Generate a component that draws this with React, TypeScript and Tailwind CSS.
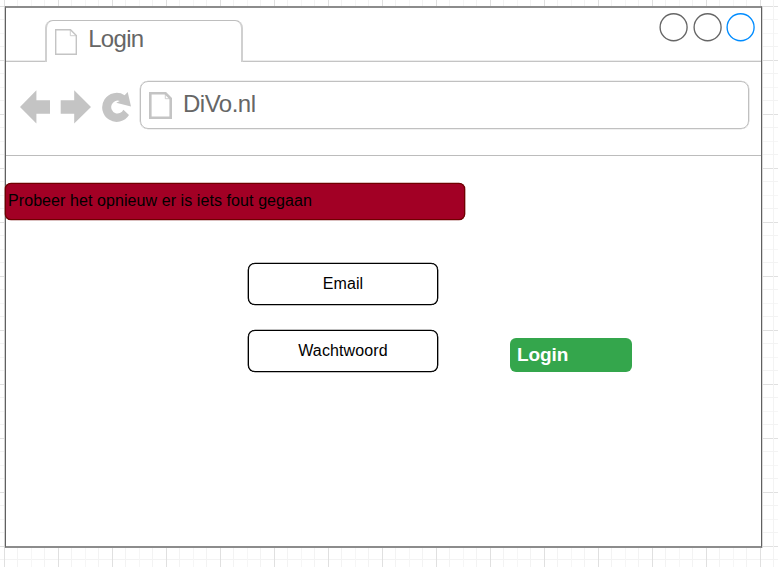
import type { ReactNode } from 'react';

function PageIcon({ className, stroke, w, h }: { className: string; stroke: number; w: number; h: number }) {
  const s = stroke / 2;
  return (
    <svg className={className} width={w} height={h} viewBox={`0 0 ${w} ${h}`} fill="none" stroke="#c4c4c4">
      <path strokeWidth={stroke} d={`M${s} ${s}H${w - 6.5}L${w - s} ${6.5}V${h - s}H${s}Z`} />
      <path strokeWidth="0.8" d={`M${w - 6.7} ${s}V6.7H${w - s}`} />
    </svg>
  );
}

function Field({ children }: { children: ReactNode }) {
  return (
    <div className="flex h-[42px] w-[190px] items-center justify-center rounded-[7px] border border-black bg-white pb-px text-base tracking-[0.12px] shadow-[0_0_0_0.35px_#000]">
      {children}
    </div>
  );
}

const circles = ['#666666', '#666666', '#008cff'];

export default function App() {
  return (
    <div
      className="h-[567px] w-[778px] overflow-hidden bg-white pt-[6px] pl-[5px] font-['Liberation_Sans',Arial,sans-serif] bg-[linear-gradient(to_right,#e0e0e0_1px,transparent_1px,transparent_13px,#f3f3f3_13px,#f3f3f3_14px,transparent_14px,transparent_27px,#f6f6f6_27px,#f6f6f6_28px,transparent_28px,transparent_40px,#f3f3f3_40px,#f3f3f3_41px,transparent_41px),linear-gradient(to_bottom,#e0e0e0_1px,transparent_1px,transparent_13px,#f3f3f3_13px,#f3f3f3_14px,transparent_14px,transparent_27px,#f6f6f6_27px,#f6f6f6_28px,transparent_28px,transparent_40px,#f3f3f3_40px,#f3f3f3_41px,transparent_41px)] bg-size-[54px_54px] bg-position-[4px_6px]"
    >
      <main className="flex h-[542px] w-[757px] flex-col border-x border-y-2 border-x-[#606060] border-y-[#8c8c8c] bg-white shadow-[1px_0_0_0_#d8d8d8,-1px_0_0_0_#d0d0d0]">
        <header className="flex h-[54px]">
          <div className="w-[39px] border-b border-[#c4c4c4] shadow-[inset_0_-1px_0_0_#ececec]" />
          <div className="mt-3 flex w-[198px] rounded-t-[8px] border-x-2 border-t border-x-[#d0d0d0] border-t-[#bebebe] pl-[7px]">
            <PageIcon className="mt-[8px] ml-[0.6px]" stroke={1.4} w={22} h={26} />
            <span className="ml-[11.6px] text-2xl leading-[36px] tracking-[-0.7px] text-[#666]">Login</span>
          </div>
          <div className="flex flex-1 justify-end border-b border-[#c4c4c4] pr-[4px] shadow-[inset_0_-1px_0_0_#ececec]">
            {circles.map((c, i) => (
              <svg key={i} className="mt-[4px] h-[30px] w-[33.75px]" viewBox="0 0 33.75 30" fill="none">
                <circle cx="17.6" cy="15.2" r="13.5" stroke={c} strokeWidth="1.35" />
              </svg>
            ))}
          </div>
        </header>

        <nav className="flex h-[94px] border-b border-[#bcbcbc] pl-[14px]">
          <svg className="mt-[26px] shrink-0" width="112" height="36" viewBox="0 0 112 36" fill="#c4c4c4">
            <path d="M0 19L16.4 2.2V12.2H30V25.8H16.4V35.4Z" />
            <path d="M71 19L54.2 2.2V12.2H40.7V25.8H54.2V35.4Z" />
            <path d="M107.7 4L111 18.5L96.2 14.7L99.8 13A6.4 6.4 0 1 0 103.4 21.7L109 27A14.5 14.5 0 1 1 104.6 7.2Z" />
          </svg>
          <div className="mt-[19px] ml-[8px] flex h-[48px] w-[609px] rounded-[8px] border border-[#c0c0c0] pl-[7px] shadow-[0_0_0_0.35px_#c4c4c4]">
            <PageIcon className="mt-[10px] ml-px" stroke={2.6} w={23} h={27} />
            <span className="ml-[11px] text-2xl leading-[43px] tracking-[-0.5px] text-[#666]">DiVo.nl</span>
          </div>
        </nav>

        <section>
          <div className="mt-[27px] -ml-px flex h-[37px] w-[460px] items-center rounded-[6px] border border-[#6f0000] bg-[#a20025] pb-[2px] pl-[2px] text-base tracking-[0.08px] text-black shadow-[0_0_0_0.35px_#6f0000]">
            Probeer het opnieuw er is iets fout gegaan
          </div>
          <div className="mt-[43px] ml-[242px] flex items-end gap-[72px]">
            <div className="flex flex-col gap-[25px]">
              <Field>Email</Field>
              <Field>Wachtwoord</Field>
            </div>
            <button className="flex h-[34px] w-[122px] items-center rounded-[6px] bg-[#34a64c] pt-px pl-[7px] text-[19px] font-bold tracking-[-0.1px] text-white">
              Login
            </button>
          </div>
        </section>
      </main>
    </div>
  );
}
